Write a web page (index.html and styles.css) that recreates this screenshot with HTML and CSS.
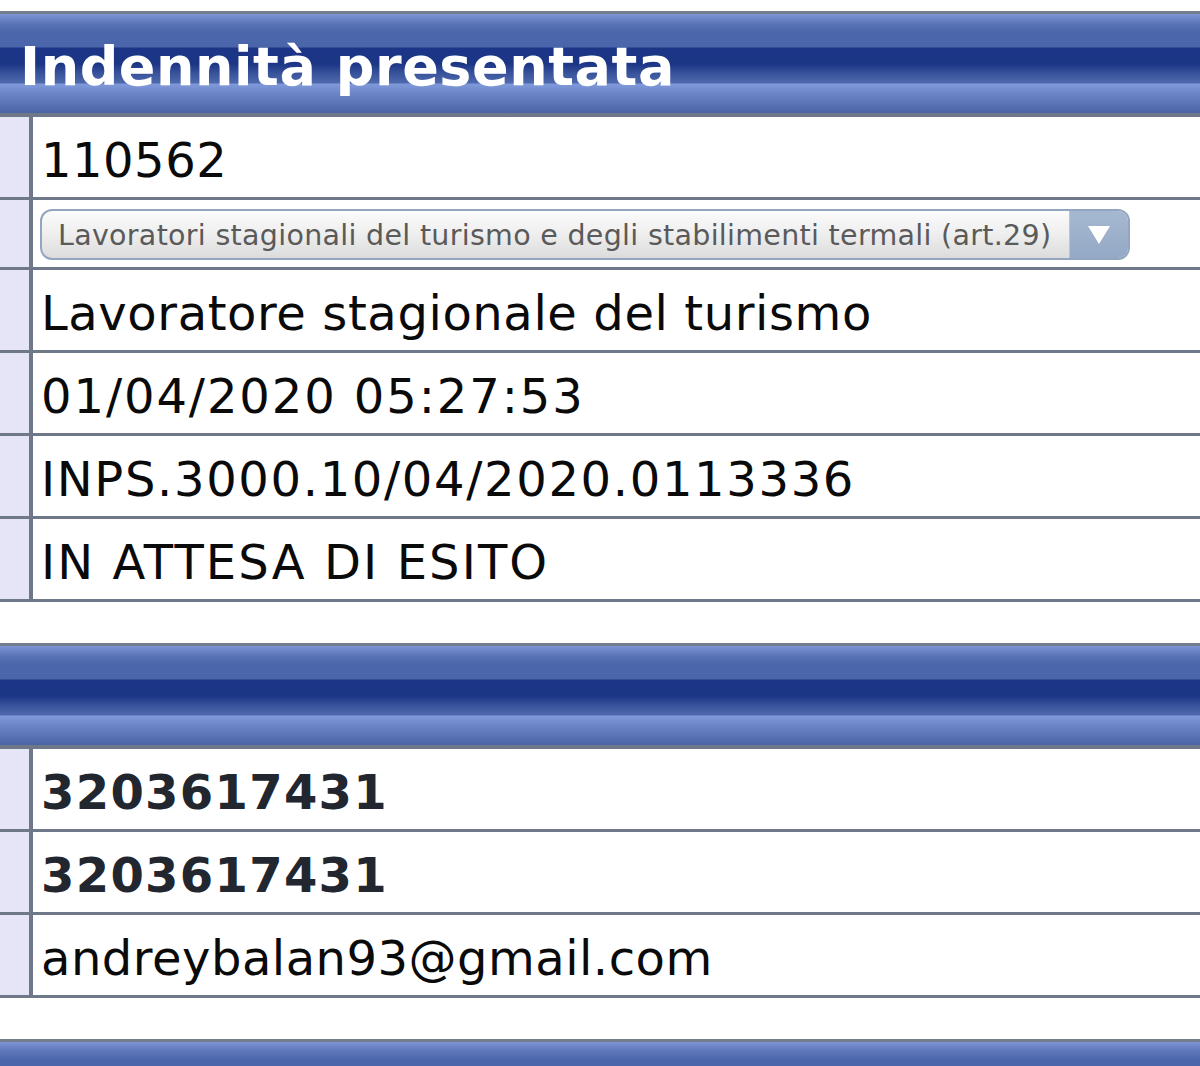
FILE: index.html
```html
<!DOCTYPE html>
<html lang="it">
<head>
<meta charset="utf-8">
<title>Indennità presentata</title>
<link rel="stylesheet" href="styles.css">
</head>
<body>
<div class="page">
  <div class="bar bar-first"><h1 class="bar-title">Indennità presentata</h1></div>
  <div class="rows">
    <div class="row"><div class="label"></div><div class="value sp-a">110562</div></div>
    <div class="row row-select"><div class="label"></div><div class="value">
      <div class="select">
        <span class="select-text">Lavoratori stagionali del turismo e degli stabilimenti termali (art.29)</span>
        <span class="select-arrow"><svg width="24" height="20" viewBox="0 0 24 20"><polygon points="1,1 23,1 12,19" fill="#ffffff"/></svg></span>
      </div>
    </div></div>
    <div class="row"><div class="label"></div><div class="value sp-b">Lavoratore stagionale del turismo</div></div>
    <div class="row"><div class="label"></div><div class="value sp-c">01/04/2020 05:27:53</div></div>
    <div class="row"><div class="label"></div><div class="value sp-d">INPS.3000.10/04/2020.0113336</div></div>
    <div class="row"><div class="label"></div><div class="value sp-e">IN ATTESA DI ESITO</div></div>
  </div>
  <div class="spacer"></div>
  <div class="bar"></div>
  <div class="rows">
    <div class="row"><div class="label"></div><div class="value strong">3203617431</div></div>
    <div class="row"><div class="label"></div><div class="value strong">3203617431</div></div>
    <div class="row"><div class="label"></div><div class="value sp-a">andreybalan93@gmail.com</div></div>
  </div>
  <div class="spacer"></div>
  <div class="bar"></div>
</div>
</body>
</html>
```
FILE: styles.css
```css
html, body {
  margin: 0;
  padding: 0;
  background: #ffffff;
}
body {
  font-family: "DejaVu Sans", Verdana, sans-serif;
  overflow: hidden;
  height: 1066px;
}
.page {
  padding-top: 11px;
  display: flex;
  flex-direction: column;
}
.bar {
  height: 99px;
  border-top: 3px solid #737d8c;
  border-bottom: 4px solid #6e7888;
  background: linear-gradient(to bottom,
    #7d94d5 0px,
    #5a74b7 10px,
    #4d67ac 18px,
    #4b65aa 33px,
    #1c3586 34px,
    #1c3686 50px,
    #3a549d 60px,
    #4d67ab 68px,
    #5069ad 69px,
    #8099da 70px,
    #6b84c6 80px,
    #4b64a6 99px);
  flex: none;
}
.bar-title {
  margin: 0;
  padding: 22px 0 0 20px;
  font-family: "DejaVu Sans", Verdana, sans-serif;
  font-weight: bold;
  font-size: 54px;
  line-height: 62px;
  letter-spacing: 0.55px;
  color: #ffffff;
  white-space: nowrap;
}
.rows {
  display: flex;
  flex-direction: column;
}
.row {
  display: flex;
  height: 80px;
  border-bottom: 3px solid #6e7888;
}
.row-select {
  height: 67px;
}
.label {
  width: 29px;
  background: #e5e5f7;
  border-right: 4px solid #6e7888;
  flex: none;
}
.value {
  flex: 1;
  padding: 15px 0 0 8px;
  font-size: 48px;
  line-height: 56px;
  color: #0a0a0a;
  white-space: nowrap;
}
.sp-a { letter-spacing: 0.5px; }
.sp-b { letter-spacing: 0.6px; }
.sp-c { letter-spacing: 1.9px; }
.sp-d { letter-spacing: 1.65px; }
.sp-e { letter-spacing: 2.1px; }
.value.strong {
  font-weight: bold;
  font-size: 48px;
  letter-spacing: 1.3px;
  color: #22262f;
}
.row-select .value {
  padding: 9px 0 0 7px;
}
.select {
  display: flex;
  width: 1086px;
  height: 47px;
  border: 2px solid #93a5bf;
  border-radius: 12px;
  overflow: hidden;
  background: linear-gradient(to bottom, #fbfbfb 0%, #eeeeee 50%, #dcdcdc 100%);
}
.select-text {
  flex: 1;
  padding-left: 16px;
  padding-top: 2px;
  font-size: 28.5px;
  line-height: 45px;
  letter-spacing: 0.3px;
  color: #5a5a5a;
  white-space: nowrap;
  overflow: hidden;
}
.select-arrow {
  width: 58px;
  display: flex;
  align-items: center;
  justify-content: center;
  background: linear-gradient(to bottom, #a6b8d1 0%, #94a9c6 100%);
  border-left: 1px solid #b7c5d8;
}
.spacer {
  height: 41px;
}
```
